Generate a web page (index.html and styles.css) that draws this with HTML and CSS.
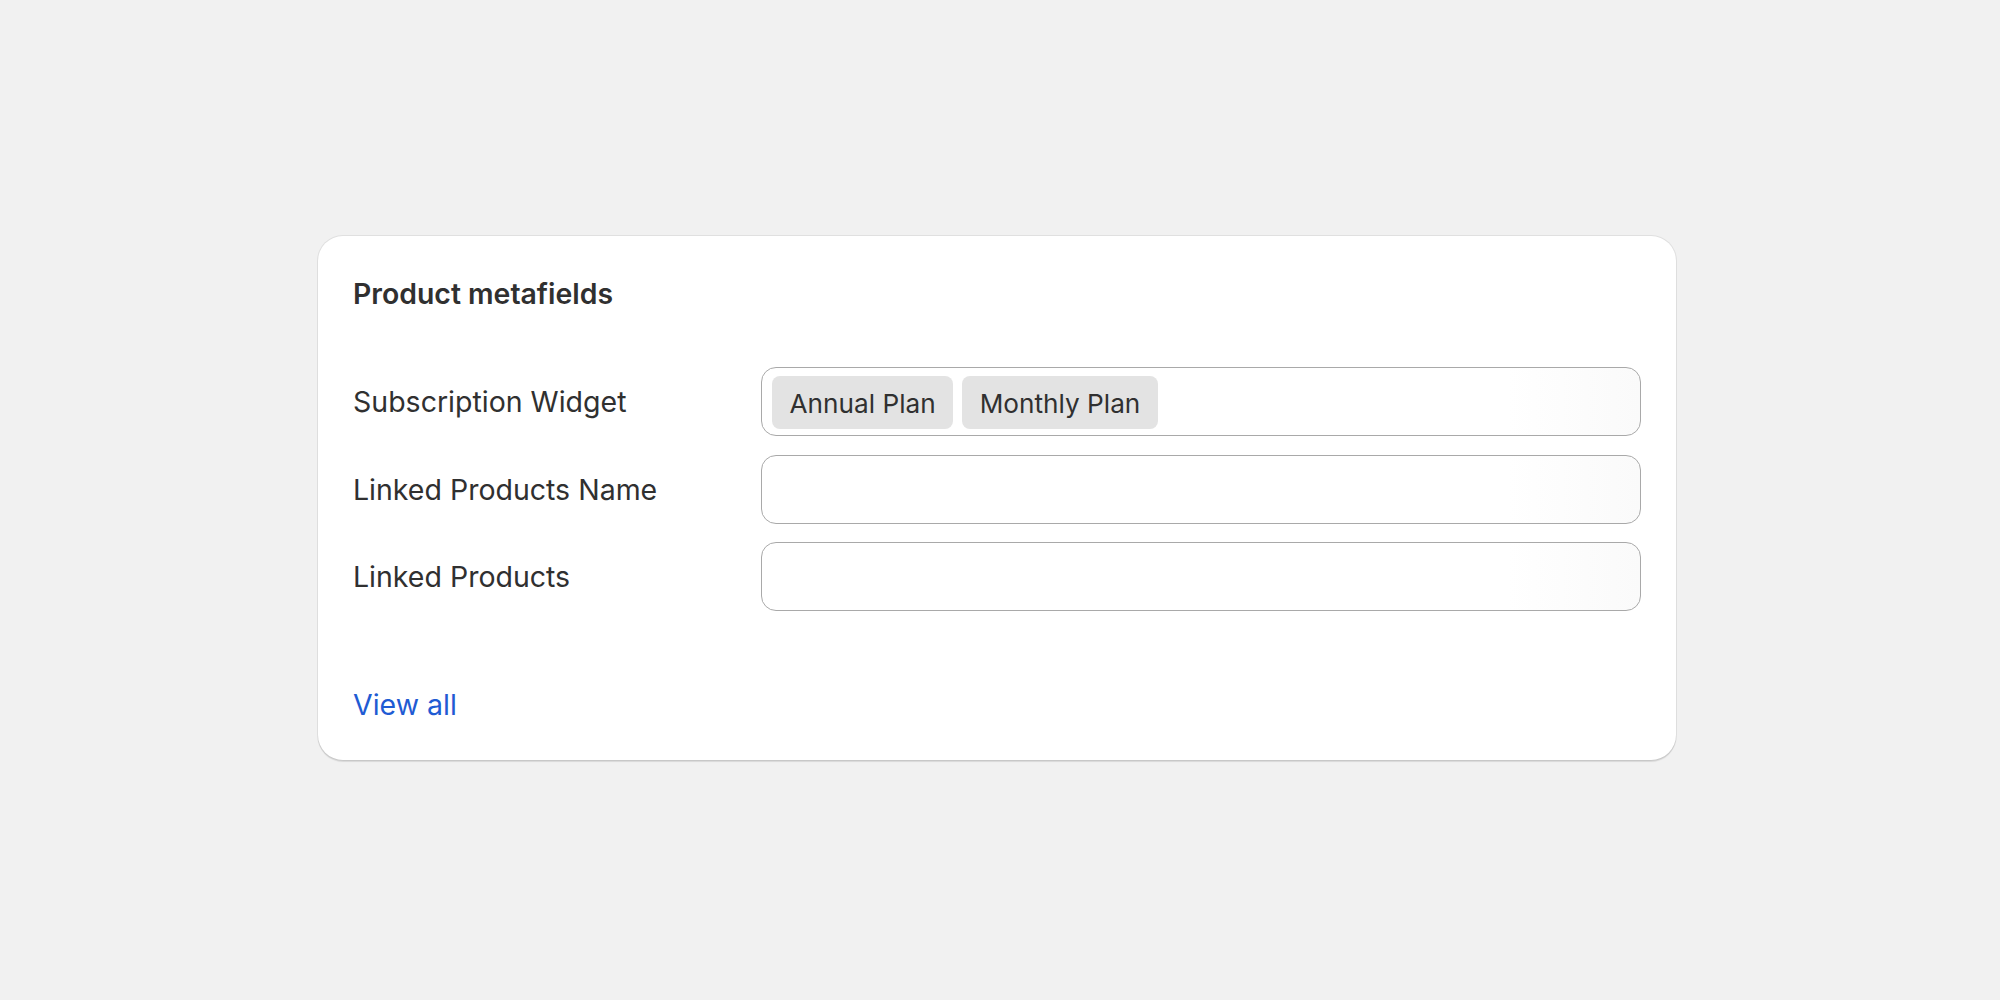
FILE: index.html
```html
<!DOCTYPE html>
<html lang="en">
<head>
<meta charset="utf-8">
<title>Product metafields</title>
<link rel="stylesheet" href="styles.css">
</head>
<body>
<main class="page">
  <section class="card">
    <h2 class="card-title">Product metafields</h2>
    <div class="fields">
      <div class="row">
        <div class="label">Subscription Widget</div>
        <div class="input">
          <span class="tag">Annual Plan</span>
          <span class="tag">Monthly Plan</span>
        </div>
      </div>
      <div class="row">
        <div class="label">Linked Products Name</div>
        <div class="input"></div>
      </div>
      <div class="row">
        <div class="label">Linked Products</div>
        <div class="input"></div>
      </div>
    </div>
    <a class="view-all" href="#">View all</a>
  </section>
</main>
</body>
</html>
```

FILE: styles.css
```css
html, body {
  margin: 0;
  padding: 0;
  background: #f1f1f1;
}
body {
  font-family: Inter, "Noto Sans", sans-serif;
  color: #303030;
  font-size: 28.5px;
  line-height: 35px;
}
.page {
  width: 2000px;
  height: 1000px;
  box-sizing: border-box;
  padding-top: 236px;
  padding-left: 318px;
}
.card {
  width: 1358px;
  height: 524px;
  box-sizing: border-box;
  background: #fff;
  border-radius: 25px;
  padding: 40px 35px 38.5px 35px;
  box-shadow: 0 0 0 1px rgba(0,0,0,0.07), 0 2px 1px rgba(0,0,0,0.10);
  display: flex;
  flex-direction: column;
}
.card-title {
  margin: 0;
  font-size: 28.4px;
  line-height: 35px;
  font-weight: 600;
}
.fields {
  margin-top: 56px;
  display: flex;
  flex-direction: column;
  gap: 18.5px;
}
.row {
  display: grid;
  grid-template-columns: 408px 1fr;
  align-items: center;
}
.label {
  font-size: 28.5px;
}
.input {
  height: 69px;
  box-sizing: border-box;
  border: 1.3px solid #a9a9a9;
  border-radius: 15px;
  background: linear-gradient(to right, #ffffff 85%, #fafafa);
  padding: 8.2px 10px 6.2px 10px;
  display: flex;
  gap: 9px;
  align-items: stretch;
}
.tag {
  background: #e3e3e3;
  border-radius: 8px;
  padding: 1px 17.5px 0 17.5px;
  display: flex;
  align-items: center;
  font-size: 26.2px;
}
.view-all {
  margin-top: auto;
  color: #1f5bd3;
  text-decoration: none;
  align-self: flex-start;
}
```
